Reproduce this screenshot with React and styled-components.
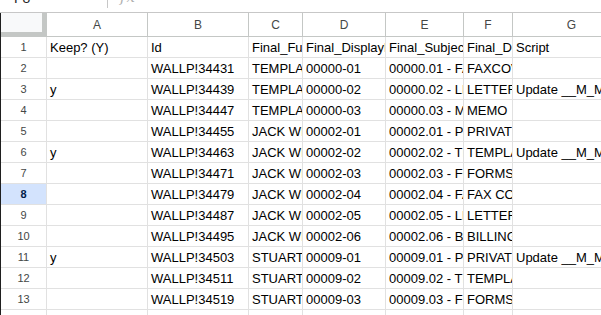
import React from "react";
import styled, { createGlobalStyle } from "styled-components";

const GlobalStyle = createGlobalStyle`
  html, body { margin: 0; padding: 0; background: #ffffff; overflow: hidden; }
  body { font-family: "Liberation Sans", Arial, sans-serif; }
  * { box-sizing: border-box; }
`;

const COLS = [
  { key: "A", width: 101 },
  { key: "B", width: 101 },
  { key: "C", width: 54 },
  { key: "D", width: 83 },
  { key: "E", width: 78 },
  { key: "F", width: 49 },
  { key: "G", width: 118 },
];

const ROWS = [
  ["Keep? (Y)", "Id", "Final_FullName", "Final_DisplayName", "Final_Subject", "Final_Description", "Script"],
  ["", "WALLP!34431", "TEMPLATES", "00000-01", "00000.01 - FAXCOVER", "FAXCOVER", ""],
  ["y", "WALLP!34439", "TEMPLATES", "00000-02", "00000.02 - LETTERHEAD", "LETTERHEAD", "Update __M_MATTER"],
  ["", "WALLP!34447", "TEMPLATES", "00000-03", "00000.03 - MEMO", "MEMO", ""],
  ["", "WALLP!34455", "JACK WILSON", "00002-01", "00002.01 - PRIVATE", "PRIVATE", ""],
  ["y", "WALLP!34463", "JACK WILSON", "00002-02", "00002.02 - TEMPLATES", "TEMPLATES", "Update __M_MATTER"],
  ["", "WALLP!34471", "JACK WILSON", "00002-03", "00002.03 - FORMS", "FORMS", ""],
  ["", "WALLP!34479", "JACK WILSON", "00002-04", "00002.04 - FAX COVER", "FAX COVER", ""],
  ["", "WALLP!34487", "JACK WILSON", "00002-05", "00002.05 - LETTERS", "LETTERS", ""],
  ["", "WALLP!34495", "JACK WILSON", "00002-06", "00002.06 - BILLING", "BILLING", ""],
  ["y", "WALLP!34503", "STUART", "00009-01", "00009.01 - PRIVATE", "PRIVATE", "Update __M_MATTER"],
  ["", "WALLP!34511", "STUART", "00009-02", "00009.02 - TEMPLATES", "TEMPLATES", ""],
  ["", "WALLP!34519", "STUART", "00009-03", "00009.03 - FORMS", "FORMS", ""],
  ["", "", "", "", "", "", ""],
];

const SELECTED_ROW = 8;

const Page = styled.div`
  width: 601px;
  height: 315px;
  overflow: hidden;
  display: flex;
  flex-direction: column;
`;

const FormulaBar = styled.div`
  height: 13px;
  flex: none;
  display: flex;
  align-items: flex-start;
  border-bottom: 1px solid #c7c7c7;
  overflow: hidden;
`;

const NameBox = styled.div`
  width: 107px;
  padding-left: 14px;
  font-size: 14px;
  line-height: 14px;
  color: #1f1f1f;
  margin-top: -9px;
`;

const Divider = styled.div`
  width: 1px;
  height: 8px;
  background: #c7c7c7;
`;

const Fx = styled.div`
  padding-left: 12px;
  font-size: 15px;
  line-height: 15px;
  font-style: italic;
  font-family: "DejaVu Serif", "Liberation Serif", serif;
  color: #b0b0b0;
  margin-top: -10px;
  letter-spacing: 1px;
`;

const Sheet = styled.div`
  display: grid;
  grid-template-columns: 46px ${COLS.map((c) => c.width + "px").join(" ")};
  grid-auto-rows: 21px;
  grid-template-rows: 24px;
  border-left: 1px solid #1f1f1f;
  width: max-content;
`;

const Corner = styled.div`
  background: #f8f9fa;
  border-right: 1px solid #c4c7c5;
  border-bottom: 1px solid #c4c7c5;
  box-shadow: inset -4px -4px 0 0 #c4c7c5;
`;

const ColHeader = styled.div`
  display: flex;
  align-items: center;
  justify-content: center;
  background: #ffffff;
  border-right: 1px solid #c4c7c5;
  border-bottom: 1px solid #c4c7c5;
  color: #444746;
  font-family: "Liberation Sans", Arial, sans-serif;
  font-size: 12px;
  padding-top: 1px;
`;

const RowHeader = styled.div`
  display: flex;
  align-items: center;
  justify-content: center;
  background: ${(p) => (p.$selected ? "#d3e3fd" : "#ffffff")};
  border-right: 1px solid #e1e1e1;
  border-bottom: 1px solid #e1e1e1;
  color: ${(p) => (p.$selected ? "#041e49" : "#444746")};
  font-weight: ${(p) => (p.$selected ? 700 : 400)};
  font-size: 11px;
`;

const Cell = styled.div`
  border-right: 1px solid #e1e1e1;
  border-bottom: 1px solid #e1e1e1;
  padding: 1px 0 0 3px;
  font-size: 13px;
  line-height: 19px;
  color: #000000;
  white-space: nowrap;
  overflow: hidden;
`;

export default function App() {
  return (
    <Page>
      <GlobalStyle />
      <FormulaBar>
        <NameBox>F8</NameBox>
        <Divider />
        <Fx>fx</Fx>
      </FormulaBar>
      <Sheet>
        <Corner />
        {COLS.map((c) => (
          <ColHeader key={c.key}>{c.key}</ColHeader>
        ))}
        {ROWS.map((row, i) => (
          <React.Fragment key={i}>
            <RowHeader $selected={i + 1 === SELECTED_ROW}>{i + 1}</RowHeader>
            {row.map((v, j) => (
              <Cell key={j}>{v}</Cell>
            ))}
          </React.Fragment>
        ))}
      </Sheet>
    </Page>
  );
}
